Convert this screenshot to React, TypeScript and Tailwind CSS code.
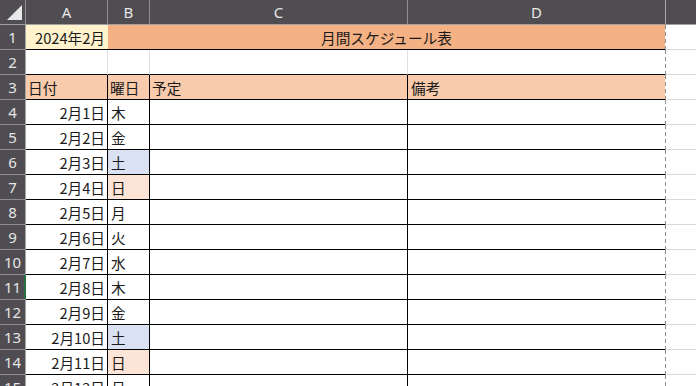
import React from "react";

const days = [
  ["2月1日", "木"],
  ["2月2日", "金"],
  ["2月3日", "土"],
  ["2月4日", "日"],
  ["2月5日", "月"],
  ["2月6日", "火"],
  ["2月7日", "水"],
  ["2月8日", "木"],
  ["2月9日", "金"],
  ["2月10日", "土"],
  ["2月11日", "日"],
  ["2月12日", "月"],
];

const jp = { fontFamily: '"Noto Sans CJK JP", "Noto Sans", sans-serif' };
const hd = { fontFamily: '"Noto Sans", "Liberation Sans", sans-serif' };

function RowHead({ n, active }: { n: number; active?: boolean }) {
  return (
    <div
      className="relative w-[26px] h-full shrink-0 bg-[#4f4d52] border-b border-b-[#8f8f8f] border-r border-r-[#a6a6a6] flex items-center justify-center text-[15px] text-[#e6e6e6]"
      style={hd}
    >
      {n}
      {active && <div className="absolute right-[-1px] top-0 bottom-0 w-[2px] bg-[#217346]" />}
    </div>
  );
}

function Dash() {
  return (
    <div className="w-[1px] h-full shrink-0 bg-[repeating-linear-gradient(to_bottom,#8f8f8f_0px,#8f8f8f_4px,transparent_4px,transparent_7px)]" />
  );
}

export default function App() {
  return (
    <div className="w-[696px] h-[386px] overflow-hidden bg-white select-none" style={jp}>
      {/* column header */}
      <div className="flex h-[25px] bg-[#4f4d52] border-b border-b-[#a0a0a0] text-[15px] text-[#e6e6e6]" style={hd}>
        <div className="relative w-[26px] shrink-0 border-r border-r-[#8f8f8f]">
          <svg className="absolute left-0 top-0" width="26" height="24" viewBox="0 0 26 24">
            <polygon points="7,20 22,20 22,5" fill="#e8e8e8" />
          </svg>
        </div>
        <div className="w-[82px] shrink-0 border-r border-r-[#8f8f8f] flex items-center justify-center">A</div>
        <div className="w-[42px] shrink-0 border-r border-r-[#8f8f8f] flex items-center justify-center">B</div>
        <div className="w-[258px] shrink-0 border-r border-r-[#8f8f8f] flex items-center justify-center">C</div>
        <div className="w-[258px] shrink-0 border-r border-r-[#a6a6a6] flex items-center justify-center">D</div>
        <div className="flex-1" />
      </div>

      {/* row 1 */}
      <div className="flex h-[25px] text-[14.67px] text-[#1a1a1a]">
        <RowHead n={1} />
        <div className="w-[82px] shrink-0 bg-[#fff2cc] border-b border-b-black flex items-center justify-end pr-[3px] pt-[1px]">
          2024年2月
        </div>
        <div className="w-[557px] shrink-0 bg-[#f4b183] border-b border-b-black flex items-center justify-center pt-[1px]">
          月間スケジュール表
        </div>
        <Dash />
        <div className="flex-1 border-b border-b-[#d9d9d9]" />
      </div>

      {/* row 2 */}
      <div className="flex h-[25px]">
        <RowHead n={2} />
        <div className="w-[82px] shrink-0 border-b border-b-black border-r border-r-[#e1e1e1]" />
        <div className="w-[42px] shrink-0 border-b border-b-black border-r border-r-[#e1e1e1]" />
        <div className="w-[258px] shrink-0 border-b border-b-black border-r border-r-[#e1e1e1]" />
        <div className="w-[257px] shrink-0 border-b border-b-black" />
        <Dash />
        <div className="flex-1 border-b border-b-[#d9d9d9]" />
      </div>

      {/* row 3 */}
      <div className="flex h-[25px] text-[14.67px] text-[#1a1a1a]">
        <RowHead n={3} />
        <div className="w-[82px] shrink-0 bg-[#f8cbad] border-b border-b-black border-r border-r-black flex items-center pl-[2px] pt-[1px]">
          日付
        </div>
        <div className="w-[42px] shrink-0 bg-[#f8cbad] border-b border-b-black border-r border-r-black flex items-center pl-[2px] pt-[1px]">
          曜日
        </div>
        <div className="w-[258px] shrink-0 bg-[#f8cbad] border-b border-b-black border-r border-r-black flex items-center pl-[2px] pt-[1px]">
          予定
        </div>
        <div className="w-[257px] shrink-0 bg-[#f8cbad] border-b border-b-black flex items-center pl-[3px] pt-[1px]">
          備考
        </div>
        <Dash />
        <div className="flex-1 border-b border-b-[#d9d9d9]" />
      </div>

      {days.map(([d, w], i) => {
        const bg = w === "土" ? "bg-[#d9e1f2]" : w === "日" ? "bg-[#fce4d6]" : "bg-white";
        return (
          <div key={i} className="flex h-[25px] text-[14.67px] text-[#1a1a1a]">
            <RowHead n={i + 4} active={i + 4 === 11} />
            <div className="w-[82px] shrink-0 border-b border-b-black border-r border-r-black flex items-center justify-end pr-[2px] pt-[1px]">
              {d}
            </div>
            <div className={`w-[42px] shrink-0 ${bg} border-b border-b-black border-r border-r-black flex items-center pl-[3px] pt-[1px]`}>
              {w}
            </div>
            <div className="w-[258px] shrink-0 border-b border-b-black border-r border-r-black" />
            <div className="w-[257px] shrink-0 border-b border-b-black" />
            <Dash />
            <div className="flex-1 border-b border-b-[#d9d9d9]" />
          </div>
        );
      })}
    </div>
  );
}
